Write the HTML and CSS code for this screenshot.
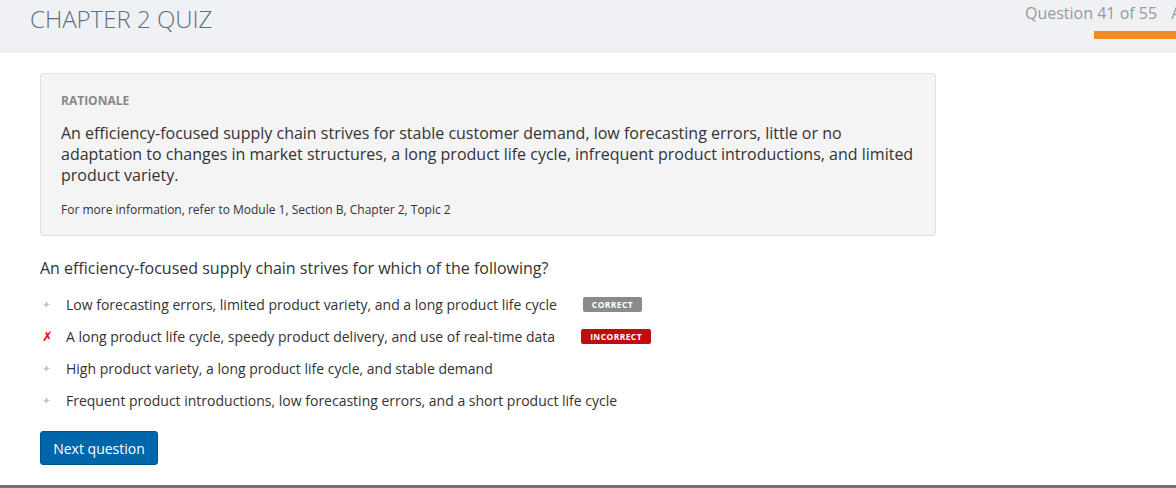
FILE: index.html
```html
<!DOCTYPE html>
<html>
<head>
<meta charset="utf-8">
<link rel="stylesheet" href="styles.css">
</head>
<body>
<div class="page">
  <header class="header">
    <h1 class="title">CHAPTER 2 QUIZ</h1>
    <div class="progress">
      <div class="progress-text">Question 41 of 55 <span class="extra">Answered</span></div>
      <div class="progress-bar"></div>
    </div>
  </header>
  <main class="main">
    <section class="rationale">
      <div class="rationale-label">RATIONALE</div>
      <p class="rationale-body">An efficiency-focused supply chain strives for stable customer demand, low forecasting errors, little or no adaptation to changes in market structures, a long product life cycle, infrequent product introductions, and limited product variety.</p>
      <p class="rationale-ref">For more information, refer to Module 1, Section B, Chapter 2, Topic 2</p>
    </section>
    <p class="question">An efficiency-focused supply chain strives for which of the following?</p>
    <ul class="options">
      <li class="option"><span class="mark"><svg class="dot" width="7" height="7" viewBox="0 0 7 7"><path d="M3.5 0 L4.4 2.6 L7 3.5 L4.4 4.4 L3.5 7 L2.6 4.4 L0 3.5 L2.6 2.6 Z"/></svg></span><span class="opt-text">Low forecasting errors, limited product variety, and a long product life cycle</span><span class="badge badge-correct">CORRECT</span></li>
      <li class="option"><span class="mark cross">&#x2717;</span><span class="opt-text">A long product life cycle, speedy product delivery, and use of real-time data</span><span class="badge badge-incorrect">INCORRECT</span></li>
      <li class="option"><span class="mark"><svg class="dot" width="7" height="7" viewBox="0 0 7 7"><path d="M3.5 0 L4.4 2.6 L7 3.5 L4.4 4.4 L3.5 7 L2.6 4.4 L0 3.5 L2.6 2.6 Z"/></svg></span><span class="opt-text">High product variety, a long product life cycle, and stable demand</span></li>
      <li class="option"><span class="mark"><svg class="dot" width="7" height="7" viewBox="0 0 7 7"><path d="M3.5 0 L4.4 2.6 L7 3.5 L4.4 4.4 L3.5 7 L2.6 4.4 L0 3.5 L2.6 2.6 Z"/></svg></span><span class="opt-text">Frequent product introductions, low forecasting errors, and a short product life cycle</span></li>
    </ul>
    <button class="next-btn">Next question</button>
  </main>
  <div class="footer-bar"></div>
</div>
</body>
</html>
```
FILE: styles.css
```css
* { box-sizing: border-box; }
html, body { margin: 0; padding: 0; }
body {
  font-family: "Open Sans", "Noto Sans", sans-serif;
  background: #fff;
  color: #333;
  width: 1176px;
  height: 488px;
  overflow: hidden;
}
.page {
  display: flex;
  flex-direction: column;
  height: 488px;
}
.header {
  background: #eff1f4;
  height: 53px;
  display: flex;
  justify-content: space-between;
  align-items: flex-start;
  padding-left: 30px;
  overflow: hidden;
}
.title {
  margin: 4px 0 0 0;
  font-weight: 300;
  font-size: 24px;
  line-height: 30px;
  color: #5f6f80;
}
.progress {
  display: flex;
  flex-direction: column;
  align-items: flex-end;
  width: 151px;
  flex: none;
  padding-top: 2px;
}
.progress-text {
  font-size: 16px;
  line-height: 22px;
  color: #999;
  white-space: nowrap;
  width: 151px;
  overflow: hidden;
}
.extra { margin-left: 10px; }
.progress-bar {
  margin-top: 7px;
  width: 82px;
  height: 8px;
  background: #f28c1e;
}
.main {
  flex: 1;
  padding: 20px 0 0 40px;
}
.rationale {
  width: 896px;
  background: #f4f4f4;
  border: 1px solid #e0e0e0;
  border-radius: 3px;
  padding: 19px 20px 17px 20px;
}
.rationale-label {
  font-size: 12px;
  font-weight: 700;
  color: #888;
  line-height: 16px;
}
.rationale-body {
  margin: 14px 0 0 0;
  font-size: 16px;
  line-height: 21px;
  color: #333;
}
.rationale-ref {
  margin: 16px 0 0 0;
  font-size: 12px;
  line-height: 16px;
  color: #333;
}
.question {
  margin: 21px 0 0 0;
  font-size: 16px;
  line-height: 22px;
  color: #333;
}
.options {
  list-style: none;
  margin: 15px 0 0 0;
  padding: 0;
  display: flex;
  flex-direction: column;
  gap: 12.1px;
}
.option {
  display: flex;
  align-items: center;
  height: 20px;
  font-size: 14px;
  color: #333;
}
.mark {
  width: 26px;
  flex: none;
  display: flex;
  align-items: center;
  padding-left: 2px;
}
.dot {
  fill: #bdbdbd;
  margin-left: 1px;
}
.cross {
  color: #e60000;
  font-size: 13px;
  font-weight: 700;
  font-family: "DejaVu Sans", sans-serif;
}
.badge {
  display: inline-block;
  color: #fff;
  font-size: 8.5px;
  font-weight: 700;
  letter-spacing: 0.4px;
  line-height: 15px;
  height: 15px;
  padding: 0 9px;
  border-radius: 2px;
}
.badge-correct { background: #8a8a8a; margin-left: 26px; }
.badge-incorrect { background: #c00d0d; margin-left: 26px; }
.next-btn {
  margin-top: 21px;
  display: block;
  background: #0066aa;
  color: #fff;
  border: 1px solid #00558f;
  border-radius: 3px;
  font-family: "Open Sans", sans-serif;
  font-size: 14px;
  height: 34px;
  width: 118px;
  padding: 0;
}
.footer-bar {
  height: 3px;
  background: #6a737b;
  flex: none;
}
```
